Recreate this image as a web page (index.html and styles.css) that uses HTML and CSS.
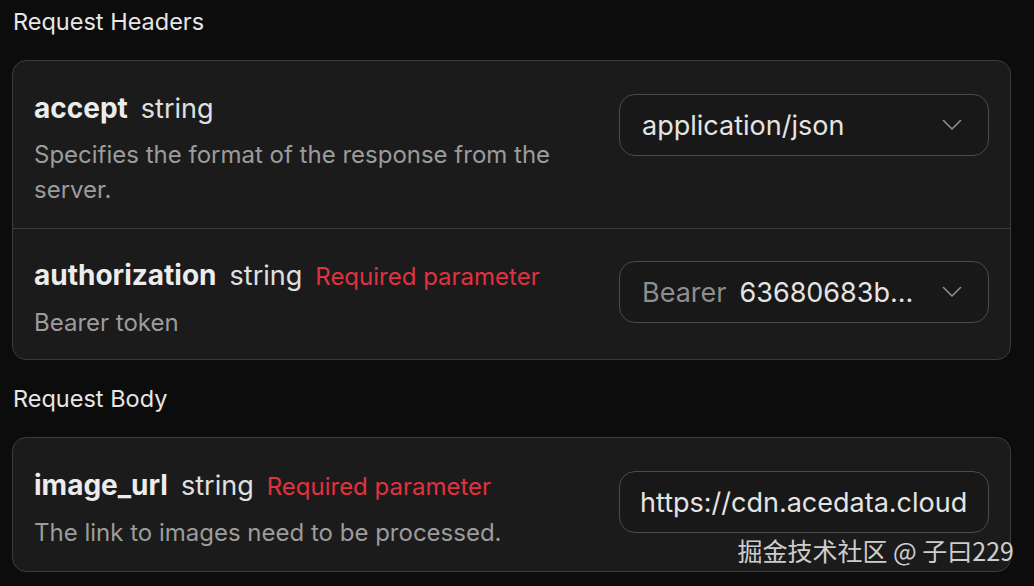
FILE: index.html
```html
<!DOCTYPE html>
<html lang="en">
<head>
<meta charset="utf-8">
<link rel="stylesheet" href="styles.css">
</head>
<body>
<div class="page">
  <h2 class="section-title">Request Headers</h2>
  <div class="card">
    <div class="param">
      <div class="info">
        <div class="title"><span class="name">accept</span><span class="type">string</span></div>
        <div class="desc">Specifies the format of the response from the server.</div>
      </div>
      <div class="field select">
        <span class="value">application/json</span>
        <svg class="chev" width="20" height="12" viewBox="0 0 20 12"><path d="M1.5 1.5 L10 10 L18.5 1.5" fill="none" stroke="#8d8d8d" stroke-width="1.6" stroke-linecap="round" stroke-linejoin="round"/></svg>
      </div>
    </div>
    <div class="param">
      <div class="info">
        <div class="title"><span class="name">authorization</span><span class="type">string</span><span class="req">Required parameter</span></div>
        <div class="desc">Bearer token</div>
      </div>
      <div class="field select">
        <span class="value"><span class="prefix">Bearer</span>63680683b...</span>
        <svg class="chev" width="20" height="12" viewBox="0 0 20 12"><path d="M1.5 1.5 L10 10 L18.5 1.5" fill="none" stroke="#8d8d8d" stroke-width="1.6" stroke-linecap="round" stroke-linejoin="round"/></svg>
      </div>
    </div>
  </div>
  <h2 class="section-title second">Request Body</h2>
  <div class="card">
    <div class="param">
      <div class="info">
        <div class="title"><span class="name">image_url</span><span class="type">string</span><span class="req">Required parameter</span></div>
        <div class="desc">The link to images need to be processed.</div>
      </div>
      <div class="field input">
        <span class="value">https://cdn.acedata.cloud</span>
      </div>
    </div>
  </div>
</div>
<div class="watermark">掘金技术社区 @ 子曰229</div>
</body>
</html>
```

FILE: styles.css
```css
html, body {
  margin: 0;
  padding: 0;
  background: #0c0c0c;
  width: 1034px;
  height: 586px;
  overflow: hidden;
}
body {
  font-family: Inter, "Noto Sans", "Noto Sans CJK SC", sans-serif;
  color: #e8e8e8;
  position: relative;
}
.page {
  padding: 6px 23px 0 12px;
}
.section-title {
  margin: 0;
  font-size: 23.5px;
  font-weight: 400;
  line-height: 32px;
  padding-left: 1px;
  color: #e6e6e6;
}
.section-title.second {
  margin-top: 23px;
}
.card {
  margin-top: 22px;
  background: #1b1b1b;
  border: 1px solid #3b3b3b;
  border-radius: 14px;
}
.param {
  display: flex;
  align-items: flex-start;
  justify-content: space-between;
  padding: 29px 21px 21px 21px;
}
.param + .param {
  border-top: 1px solid #3b3b3b;
  padding: 28px 21px 19px 21px;
}
.info {
  flex: 1;
  max-width: 535px;
}
.title {
  display: flex;
  align-items: baseline;
  gap: 13px;
  line-height: 36px;
  font-size: 27px;
}
.name {
  font-weight: 700;
  font-size: 28px;
  color: #ececec;
}
.type {
  color: #e0e0e0;
}
.req {
  color: #e0323f;
  font-size: 24px;
}
.desc {
  margin-top: 10px;
  font-size: 24px;
  line-height: 35px;
  color: #9c9c9c;
}
.field {
  margin-top: 4px;
  width: 370px;
  height: 62px;
  box-sizing: border-box;
  border: 1.5px solid #4a4a4a;
  border-radius: 16px;
  background: #181818;
  display: flex;
  align-items: center;
  justify-content: space-between;
  padding: 0 26px 0 22px;
  font-size: 27px;
  color: #e4e4e4;
  white-space: nowrap;
  overflow: hidden;
}
.field.input {
  padding: 0 10px 0 20px;
}
.prefix {
  color: #8e8e8e;
  margin-right: 13px;
}
.chev {
  flex: none;
}
.watermark {
  position: absolute;
  right: 20px;
  bottom: 18px;
  font-size: 25px;
  color: rgba(255, 255, 255, 0.8);
  font-family: "Noto Sans CJK SC", sans-serif;
}
```
